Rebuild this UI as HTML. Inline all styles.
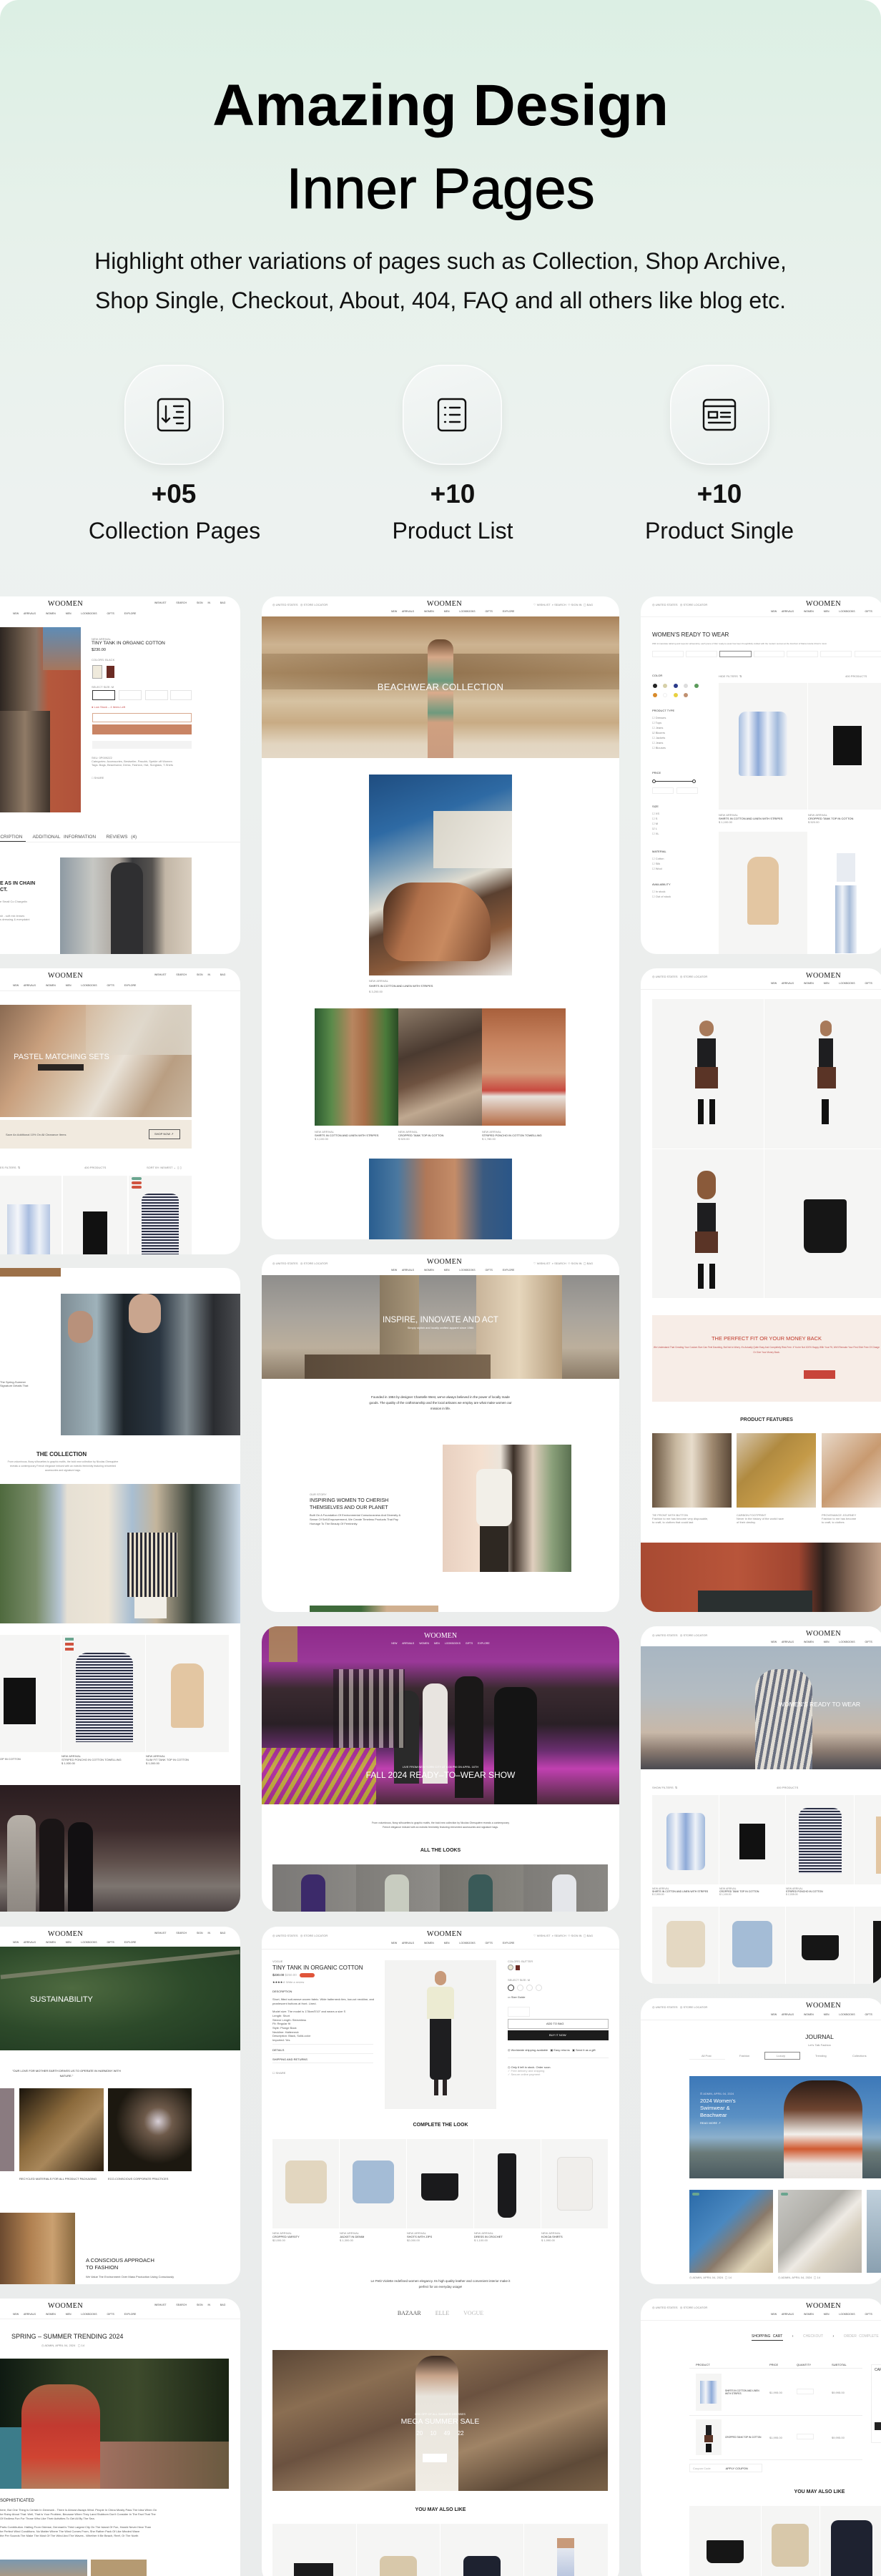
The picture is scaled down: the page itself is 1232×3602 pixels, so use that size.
<!DOCTYPE html>
<html><head><meta charset="utf-8"><style>
*{margin:0;padding:0;box-sizing:border-box}
html,body{width:1232px;height:3602px;overflow:hidden;background:#fff}
#pg{position:absolute;left:0;top:0;width:1232px;height:3602px;border-radius:26px 26px 0 0;overflow:hidden;
background:linear-gradient(180deg,#dcefe4 0px,#e6f1ea 300px,#edf2f0 700px,#eceeed 1400px,#eaecec 3602px);font-family:"Liberation Sans",sans-serif}
.a{position:absolute}
.h1{left:0;width:1232px;text-align:center;color:#000}
.sub{left:0;width:1232px;text-align:center;font-size:32px;color:#111;line-height:55px}
.sq{width:139px;height:140px;border-radius:56px;background:linear-gradient(160deg,#f4f7f6,#e9efed);box-shadow:0 6px 14px rgba(0,0,0,.06),inset 0 0 0 1.5px rgba(255,255,255,.9)}
.sq svg{position:absolute;left:45px;top:46px}
.num{width:300px;text-align:center;font-size:37px;font-weight:bold;color:#111}
.lbl{width:300px;text-align:center;font-size:32px;color:#111}
.card{position:absolute;background:#fff;border-radius:22px;overflow:hidden}
.hb{position:absolute;left:0;right:0;top:0;height:29px;border-bottom:1px solid #eee}
.logo{position:absolute;top:5px;font-family:"Liberation Serif",serif;font-size:10px;letter-spacing:.5px;color:#111}
.nav{position:absolute;top:19px;font-size:3.5px;color:#444;word-spacing:6px;white-space:nowrap}
.t{position:absolute;font-size:4px;color:#888;white-space:nowrap}
.tb{position:absolute;font-size:4px;color:#333;white-space:nowrap}
.ttl{position:absolute;color:#222;white-space:nowrap}
.ph{position:absolute;background:#f5f5f4}
.g{position:absolute}
.wt{position:absolute;color:#fff;white-space:nowrap;text-align:center}
</style></head><body><div id="pg">

<div class="a h1" style="top:100px;font-size:82px;font-weight:bold;line-height:96px">Amazing Design</div>
<div class="a h1" style="top:216px;font-size:80px;line-height:96px;-webkit-text-stroke:1px #000">Inner Pages</div>
<div class="a sub" style="top:338px">Highlight other variations of pages such as Collection, Shop Archive,</div>
<div class="a sub" style="top:393px">Shop Single, Checkout, About, 404, FAQ and all others like blog etc.</div>

<div class="a sq" style="left:174px;top:510px"><svg width="48" height="48" viewBox="0 0 48 48" fill="none" stroke="#111" stroke-width="2.4" stroke-linecap="round"><rect x="2" y="2" width="44" height="44" rx="5"/><path d="M13 12v22M8 29l5 5 5-5M24 12h13M28 20h9M24 28h13M28 36h9"/></svg></div>
<div class="a sq" style="left:563px;top:510px"><svg width="48" height="48" viewBox="0 0 48 48" fill="none" stroke="#111" stroke-width="2.4" stroke-linecap="round"><rect x="5" y="2" width="38" height="44" rx="5"/><path d="M14 14h1M21 14h14M14 24h1M21 24h14M14 34h1M21 34h14"/></svg></div>
<div class="a sq" style="left:937px;top:510px"><svg width="48" height="48" viewBox="0 0 48 48" fill="none" stroke="#111" stroke-width="2.4" stroke-linecap="round"><rect x="2" y="3" width="44" height="42" rx="5"/><path d="M2 12h44M9 20h12v8H9zM26 21h13M26 27h13M9 35h30"/></svg></div>
<div class="a num" style="left:93px;top:670px">+05</div>
<div class="a lbl" style="left:94px;top:724px">Collection Pages</div>
<div class="a num" style="left:483px;top:670px">+10</div>
<div class="a lbl" style="left:483px;top:724px">Product List</div>
<div class="a num" style="left:856px;top:670px">+10</div>
<div class="a lbl" style="left:856px;top:724px">Product Single</div>

<!-- LEFT CARD 1 -->
<div class="card" style="left:0;top:834px;width:336px;height:500px;border-radius:0 22px 22px 0">
<span class="logo" style="left:67px">WOOMEN</span>
<div class="nav" style="left:18px;top:22px">NEW ARRIVALS &nbsp;WOMEN &nbsp;MEN &nbsp;LOOKBOOKS &nbsp;GIFTS &nbsp;EXPLORE</div>
<div class="nav" style="left:216px;top:7px">WISHLIST &nbsp;SEARCH &nbsp;SIGN IN &nbsp;BAG</div>
<div class="g" style="left:0;top:43px;width:113px;height:259px;background:linear-gradient(90deg,#2d2621 0,#6e5c4c 30%,#8b7565 45%,#b5583c 60%,#b0523a 100%)"></div>
<div class="g" style="left:60px;top:43px;width:53px;height:60px;background:linear-gradient(180deg,#5e8cb6,#a6765c)"></div>
<div class="g" style="left:0;top:160px;width:70px;height:142px;background:linear-gradient(90deg,#4a3e35,#8f7a66,#3e332b)"></div>
<div class="t" style="left:128px;top:57px">NEW ARRIVAL</div>
<div class="ttl" style="left:128px;top:62px;font-size:6.5px">TINY TANK IN ORGANIC COTTON</div>
<div class="ttl" style="left:128px;top:72px;font-size:5.5px">$230.00</div>
<div class="t" style="left:128px;top:86px">COLORS: BLACK</div>
<div class="g" style="left:129px;top:96px;width:14px;height:19px;border:1px solid #aaa;background:#efeadc"></div>
<div class="g" style="left:149px;top:97px;width:11px;height:17px;background:#6b2b24"></div>
<div class="t" style="left:128px;top:124px">SELECT SIZE: M</div>
<div class="g" style="left:129px;top:131px;width:32px;height:14px;border:1px solid #333"></div>
<div class="g" style="left:166px;top:131px;width:32px;height:14px;border:1px solid #e5e5e5"></div>
<div class="g" style="left:203px;top:131px;width:32px;height:14px;border:1px solid #e5e5e5"></div>
<div class="g" style="left:238px;top:131px;width:30px;height:14px;border:1px solid #e5e5e5"></div>
<div class="t" style="left:128px;top:152px;color:#c55">● Low Stock – 4 items Left</div>
<div class="g" style="left:129px;top:163px;width:139px;height:13px;border:1px solid #d8a88e"></div>
<div class="g" style="left:129px;top:179px;width:139px;height:14px;background:#c98464"></div>
<div class="g" style="left:129px;top:202px;width:139px;height:11px;background:#f3f3f3"></div>
<div class="t" style="left:128px;top:223px">SKU: 0P0092Z2<br>Categories: Accessories, Bestseller, Pasuhir, Spekle off Women<br>Tags: Bags, Beachwear, Dress, Fashion, Hat, Sunglass, T-Shirts</div>
<div class="t" style="left:128px;top:251px">□ SHARE</div>
<div class="ttl" style="left:-4px;top:333px;font-size:6.5px;color:#555;word-spacing:3px">SCRIPTION &nbsp; ADDITIONAL INFORMATION &nbsp; REVIEWS (4)</div>
<div class="g" style="left:0;top:342px;width:36px;height:1px;background:#333"></div>
<div class="g" style="left:0;top:343px;width:336px;height:1px;background:#eee"></div>
<div class="ttl" style="left:0;top:397px;font-size:7px;font-weight:bold;line-height:9px">E AS IN CHAIN<br>CT.</div>
<div class="t" style="left:0;top:424px">e Small Co Chargelin</div>
<div class="t" style="left:0;top:444px">sh - soft mix lenses<br>s dressing &amp; everydaini</div>
<div class="g" style="left:84px;top:365px;width:184px;height:135px;background:linear-gradient(90deg,#8e9aa3 0,#c6c7c3 25%,#a9a29a 45%,#3b3b3d 55%,#55524f 70%,#c2b6a6 80%,#d9cebf 100%)"></div>
<div class="g" style="left:155px;top:372px;width:45px;height:128px;background:#2f2f31;border-radius:18px 18px 0 0"></div>
</div>

<!-- LEFT CARD 2 -->
<div class="card" style="left:0;top:1354px;width:336px;height:400px;border-radius:0 22px 22px 0">
<span class="logo" style="left:67px">WOOMEN</span>
<div class="nav" style="left:18px;top:22px">NEW ARRIVALS &nbsp;WOMEN &nbsp;MEN &nbsp;LOOKBOOKS &nbsp;GIFTS &nbsp;EXPLORE</div>
<div class="nav" style="left:216px;top:7px">WISHLIST &nbsp;SEARCH &nbsp;SIGN IN &nbsp;BAG</div>
<div class="g" style="left:0;top:31px;width:336px;height:1px;background:#eee"></div>
<div class="g" style="left:0;top:51px;width:268px;height:157px;background:linear-gradient(120deg,#8a6a52 0,#c9a07e 25%,#d8c3aa 45%,#e8e1d6 60%,#b99e82 80%,#c9b7a1 100%)"></div>
<div class="g" style="left:120px;top:51px;width:148px;height:70px;background:linear-gradient(90deg,rgba(230,225,215,.2),#d8d0c2)"></div>
<div class="wt" style="left:0;top:118px;width:172px;font-size:11px">PASTEL MATCHING SETS</div>
<div class="g" style="left:53px;top:134px;width:64px;height:9px;background:#2a2522"></div>
<div class="g" style="left:0;top:212px;width:268px;height:40px;background:#f1eadf"></div>
<div class="t" style="left:8px;top:230px;color:#555">Save An Additional 10% On All Clearance Items</div>
<div class="g" style="left:208px;top:225px;width:44px;height:14px;border:1px solid #555"></div>
<div class="t" style="left:216px;top:229px;color:#333">SHOP NOW ↗</div>
<div class="t" style="left:0;top:276px">ES FILTERS &nbsp;⇅</div>
<div class="t" style="left:118px;top:276px">400 PRODUCTS</div>
<div class="t" style="left:205px;top:276px">SORT BY: NEWEST ⌄ &nbsp;▯ ▯</div>
<div class="ph" style="left:0;top:290px;width:86px;height:110px"><div class="g" style="left:10px;top:40px;width:60px;height:70px;background:linear-gradient(90deg,#c9d5e8,#f4f6fa,#a9bde0,#eef2f8,#b5c6e3)"></div></div>
<div class="ph" style="left:88px;top:290px;width:90px;height:110px"><div class="g" style="left:28px;top:50px;width:34px;height:60px;background:#111"></div></div>
<div class="ph" style="left:180px;top:290px;width:88px;height:110px"><div class="g" style="left:18px;top:25px;width:52px;height:85px;background:repeating-linear-gradient(180deg,#2a2f45 0 2px,#e8e8ee 2px 4px);border-radius:10px 10px 0 0"></div>
<div class="g" style="left:4px;top:2px;width:14px;height:4px;background:#6aa58f;border-radius:2px"></div><div class="g" style="left:4px;top:8px;width:14px;height:4px;background:#d0533f;border-radius:2px"></div><div class="g" style="left:4px;top:14px;width:14px;height:4px;background:#d0533f;border-radius:2px"></div></div>
</div>

<!-- LEFT CARD 3 -->
<div class="card" style="left:0;top:1773px;width:336px;height:900px;border-radius:0 22px 22px 0">
<div class="g" style="left:0;top:0;width:85px;height:12px;background:#9c7048"></div>
<div class="g" style="left:85px;top:36px;width:251px;height:198px;background:linear-gradient(90deg,#7e8d95 0,#9fb2ba 20%,#1d242a 35%,#2a3540 55%,#7f8a90 70%,#2a2c30 85%,#4a4c50 100%)"></div>
<div class="g" style="left:180px;top:36px;width:45px;height:55px;background:#c9a58e;border-radius:20px"></div>
<div class="g" style="left:95px;top:60px;width:35px;height:45px;background:#b8917b;border-radius:16px"></div>
<div class="t" style="left:0;top:157px;color:#555">The Spring-Summer<br>Signature Details That</div>
<div class="ttl" style="left:0;top:256px;width:172px;text-align:center;font-size:8px;font-weight:bold">THE COLLECTION</div>
<div class="t" style="left:8px;top:268px;width:160px;text-align:center;white-space:normal;line-height:6px;font-size:3.5px">From voluminous, flowy silhouettes to graphic motifs, the bold new collection by Nicolas Ghesquière reveals a contemporary French elegance imbued with an eclectic femininity featuring reinvented accessories and signature bags.</div>
<div class="g" style="left:0;top:302px;width:336px;height:195px;background:linear-gradient(90deg,#4f6a3e 0,#7a8d6a 15%,#b7c6d4 25%,#e6e0d4 28%,#ede5d7 45%,#a8bed2 55%,#c4b59c 65%,#374038 80%,#c9d8e6 100%)"></div>
<div class="g" style="left:178px;top:370px;width:70px;height:90px;background:repeating-linear-gradient(90deg,#2c2c36 0 3px,#e8dfca 3px 6px)"></div>
<div class="g" style="left:188px;top:460px;width:45px;height:30px;background:#f2efe8"></div>
<div class="ph" style="left:0;top:513px;width:85px;height:164px"><div class="g" style="left:5px;top:60px;width:45px;height:65px;background:#111"></div></div>
<div class="ph" style="left:86px;top:513px;width:117px;height:164px"><div class="g" style="left:20px;top:25px;width:80px;height:125px;background:repeating-linear-gradient(180deg,#2a2f45 0 2px,#e8e8ee 2px 4px);border-radius:16px 16px 0 0"></div>
<div class="g" style="left:5px;top:4px;width:12px;height:4px;background:#6aa58f"></div><div class="g" style="left:5px;top:11px;width:12px;height:4px;background:#d0533f"></div><div class="g" style="left:5px;top:18px;width:12px;height:4px;background:#d0533f"></div></div>
<div class="ph" style="left:204px;top:513px;width:116px;height:164px"><div class="g" style="left:35px;top:40px;width:46px;height:90px;background:#e3c6a2;border-radius:14px 14px 4px 4px"></div></div>
<div class="t" style="left:0;top:684px;color:#555">OP IN COTTON</div>
<div class="t" style="left:86px;top:680px;color:#555">NEW ARRIVAL<br>STRIPED PONCHO IN COTTON TOWELLING<br>$ 1,930.00</div>
<div class="t" style="left:204px;top:680px;color:#555">NEW ARRIVAL<br>SLIM FIT TANK TOP IN COTTON<br>$ 1,000.00</div>
<div class="g" style="left:0;top:723px;width:336px;height:177px;background:linear-gradient(180deg,#2a1d20 0,#3b2a2b 35%,#5e4e4a 60%,#7d7570 80%,#4b4242 100%)"></div>
<div class="g" style="left:10px;top:765px;width:40px;height:135px;background:linear-gradient(#b6b0a8,#8e8882);border-radius:15px 15px 0 0"></div>
<div class="g" style="left:55px;top:770px;width:35px;height:130px;background:#1a1516;border-radius:15px 15px 0 0"></div>
<div class="g" style="left:95px;top:775px;width:35px;height:125px;background:#121012;border-radius:15px 15px 0 0"></div>
</div>

<!-- LEFT CARD 4 -->
<div class="card" style="left:0;top:2694px;width:336px;height:500px;border-radius:0 22px 22px 0">
<span class="logo" style="left:67px">WOOMEN</span>
<div class="nav" style="left:18px;top:20px">NEW ARRIVALS &nbsp;WOMEN &nbsp;MEN &nbsp;LOOKBOOKS &nbsp;GIFTS &nbsp;EXPLORE</div>
<div class="nav" style="left:216px;top:7px">WISHLIST &nbsp;SEARCH &nbsp;SIGN IN &nbsp;BAG</div>
<div class="g" style="left:0;top:28px;width:336px;height:145px;background:radial-gradient(ellipse at 30% 40%,#4e6a40,#2d4a2a 50%,#1e3620 100%)"></div>
<div class="g" style="left:0;top:50px;width:336px;height:6px;background:#8d8c78;transform:rotate(-6deg);opacity:.7"></div>
<div class="wt" style="left:0;top:96px;width:172px;font-size:11px">SUSTAINABILITY</div>
<div class="t" style="left:8px;top:198px;width:170px;text-align:center;white-space:normal;color:#333;line-height:7px">"OUR LOVE FOR MOTHER EARTH DRIVES US TO OPERATE IN HARMONY WITH NATURE."</div>
<div class="g" style="left:0;top:226px;width:20px;height:116px;background:#8a7b80"></div>
<div class="g" style="left:27px;top:226px;width:118px;height:116px;background:linear-gradient(135deg,#1a140c,#8b6a3c 40%,#a8875a 60%,#2a1e10)"></div>
<div class="g" style="left:151px;top:226px;width:117px;height:116px;background:radial-gradient(circle at 60% 40%,#d8d0d8 0,#6e5a4a 20%,#1c1810 60%)"></div>
<div class="t" style="left:27px;top:350px;color:#444">RECYCLED MATERIALS FOR ALL PRODUCT PACKAGING</div>
<div class="t" style="left:151px;top:350px;color:#444">ECO-CONSCIOUS CORPORATE PRACTICES</div>
<div class="g" style="left:0;top:400px;width:105px;height:100px;background:linear-gradient(90deg,#6b4a30,#b08050 40%,#caa070 70%,#8a6a40)"></div>
<div class="ttl" style="left:120px;top:462px;font-size:7.5px;line-height:10px">A CONSCIOUS APPROACH<br>TO FASHION</div>
<div class="t" style="left:120px;top:487px;color:#555">We Value The Environment Over Mass Production Using Consciously</div>
</div>

<!-- LEFT CARD 5 -->
<div class="card" style="left:0;top:3214px;width:336px;height:400px;border-radius:0 22px 0 0">
<span class="logo" style="left:67px">WOOMEN</span>
<div class="nav" style="left:18px;top:20px">NEW ARRIVALS &nbsp;WOMEN &nbsp;MEN &nbsp;LOOKBOOKS &nbsp;GIFTS &nbsp;EXPLORE</div>
<div class="nav" style="left:216px;top:7px">WISHLIST &nbsp;SEARCH &nbsp;SIGN IN &nbsp;BAG</div>
<div class="g" style="left:0;top:28px;width:336px;height:1px;background:#eee"></div>
<div class="ttl" style="left:16px;top:48px;font-size:9px">SPRING – SUMMER TRENDING 2024</div>
<div class="t" style="left:58px;top:63px">◷ ADMIN, APRIL 04, 2024 &nbsp; ▢ 14</div>
<div class="g" style="left:0;top:84px;width:320px;height:182px;background:linear-gradient(90deg,#0f1a12 0,#2c3a22 30%,#3d4a2c 60%,#1a2414 100%)"></div>
<div class="g" style="left:0;top:180px;width:80px;height:86px;background:#3c7c8a"></div>
<div class="g" style="left:30px;top:120px;width:110px;height:146px;background:linear-gradient(180deg,#a46040 0,#c23a30 40%,#d04432 70%,#b47a5a 100%);border-radius:40px 40px 0 0"></div>
<div class="g" style="left:140px;top:200px;width:180px;height:66px;background:linear-gradient(90deg,#a07060,#6a5a40)"></div>
<div class="ttl" style="left:0;top:280px;font-size:6px">SOPHISTICATED</div>
<div class="t" style="left:0;top:293px;line-height:6px;color:#555">here, But One Thing Is Certain In Denmark - There Is Almost Always Wind. People In China Mostly Pass The Idea When On<br>he Rainy About That. Well, That is Your Problem, Because When They Land Stubborn Don't Consider In The Fact That The<br>Of Endless Fun For Those Who Like Their Activities To Get All By The Sea.<br><br>Parts Contribution. Hailing From Odense, Denmark's Third Largest City On The Island Of Fun, Harold Never Hear Than<br>he Perfect Wind Conditions. No Matter Where The Wind Comes From, She Rather Pack Of Like Minded Wave<br>the Per Sounds The Make The Most Of The Wind And The Waves - Whether It Be Beach, Reef, Or The North</div>
<div class="g" style="left:0;top:365px;width:122px;height:35px;background:linear-gradient(#7a98b0,#c09a70)"></div>
<div class="g" style="left:127px;top:365px;width:78px;height:35px;background:#b59a72"></div>
</div>

<!-- MIDDLE CARD 1 -->
<div class="card" style="left:366px;top:834px;width:500px;height:899px">
<div class="t" style="left:15px;top:9px">◎ UNITED STATES &nbsp; ◎ STORE LOCATOR</div>
<span class="logo" style="left:231px">WOOMEN</span>
<div class="t" style="left:380px;top:9px">♡ WISHLIST &nbsp;⌕ SEARCH &nbsp;⚇ SIGN IN &nbsp;▢ BAG</div>
<div class="nav" style="left:181px;top:19px">NEW ARRIVALS &nbsp;WOMEN &nbsp;MEN &nbsp;LOOKBOOKS &nbsp;GIFTS &nbsp;EXPLORE</div>
<div class="g" style="left:0;top:28px;width:500px;height:198px;background:linear-gradient(180deg,#a8825a 0,#cdb391 20%,#b89870 40%,#d6c2a2 60%,#c8ab84 75%,#e2d5c0 90%,#e4d8c6 100%)"></div>
<div class="g" style="left:0;top:80px;width:500px;height:50px;background:linear-gradient(90deg,rgba(110,80,45,.25),rgba(90,60,30,.4) 50%,rgba(120,90,55,.3));"></div>
<div class="g" style="left:232px;top:60px;width:36px;height:166px;background:linear-gradient(180deg,#6b4a30 0,#d6a888 15%,#6e9a7e 35%,#dbab8c 45%,#6e9a7e 62%,#d0a080 70%,#c99c80 100%);border-radius:14px 14px 0 0"></div>
<div class="wt" style="left:0;top:119px;width:500px;font-size:13px;letter-spacing:.3px">BEACHWEAR COLLECTION</div>
<div class="g" style="left:150px;top:249px;width:200px;height:281px;background:linear-gradient(160deg,#1f4d80 0,#2e6aa4 25%,#7fa0b8 40%,#e0dcd0 55%,#5a4030 65%,#8a5a3a 80%,#e8e6e2 100%)"></div>
<div class="g" style="left:240px;top:300px;width:110px;height:80px;background:linear-gradient(120deg,#d8d4c8,#f0ede6)"></div>
<div class="g" style="left:170px;top:400px;width:150px;height:110px;background:linear-gradient(110deg,#3a2418 0,#b0704a 30%,#c88a60 60%,#7a4a30 100%);border-radius:40px 60px 20px 30px"></div>
<div class="t" style="left:150px;top:535px">NEW ARRIVAL</div>
<div class="tb" style="left:150px;top:542px">SHIRTS IN COTTON AND LINEN WITH STRIPES</div>
<div class="t" style="left:150px;top:550px">$ 3,200.00</div>
<div class="g" style="left:74px;top:576px;width:117px;height:164px;background:linear-gradient(90deg,#2c5a30 0,#5a8a4a 20%,#b88660 45%,#a86e48 60%,#4a7a3a 85%,#2a4a24 100%)"></div>
<div class="g" style="left:191px;top:576px;width:117px;height:164px;background:linear-gradient(160deg,#8c7a68 0,#4a3a30 35%,#6e5240 55%,#bfa890 75%,#7a6656 100%)"></div>
<div class="g" style="left:308px;top:576px;width:117px;height:164px;background:linear-gradient(180deg,#a8603c 0,#c88460 30%,#d49a78 55%,#c84a40 70%,#e8e2dc 75%,#b46a44 100%)"></div>
<div class="t" style="left:74px;top:746px">NEW ARRIVAL<br><span style="color:#333">SHIRTS IN COTTON AND LINEN WITH STRIPES</span><br>$ 1,100.00</div>
<div class="t" style="left:191px;top:746px">NEW ARRIVAL<br><span style="color:#333">CROPPED TANK TOP IN COTTON</span><br>$ 520.00</div>
<div class="t" style="left:308px;top:746px">NEW ARRIVAL<br><span style="color:#333">STRIPED PONCHO IN COTTON TOWELLING</span><br>$ 1,780.00</div>
<div class="g" style="left:150px;top:786px;width:200px;height:113px;background:linear-gradient(90deg,#2a5e90 0,#4a78a0 20%,#b07858 40%,#c48c68 60%,#3a5a80 80%,#2a5688 100%)"></div>
</div>

<!-- MIDDLE CARD 2 -->
<div class="card" style="left:366px;top:1754px;width:500px;height:500px">
<div class="t" style="left:15px;top:10px">◎ UNITED STATES &nbsp; ◎ STORE LOCATOR</div>
<span class="logo" style="left:231px">WOOMEN</span>
<div class="t" style="left:380px;top:10px">♡ WISHLIST &nbsp;⌕ SEARCH &nbsp;⚇ SIGN IN &nbsp;▢ BAG</div>
<div class="nav" style="left:181px;top:20px">NEW ARRIVALS &nbsp;WOMEN &nbsp;MEN &nbsp;LOOKBOOKS &nbsp;GIFTS &nbsp;EXPLORE</div>
<div class="g" style="left:0;top:29px;width:500px;height:145px;background:linear-gradient(180deg,#8f8e8c 0,#a9a49c 40%,#bcaf9c 70%,#8a7a66 100%)"></div>
<div class="g" style="left:165px;top:29px;width:55px;height:145px;background:linear-gradient(90deg,#8a7a62,#a8967a)"></div>
<div class="g" style="left:300px;top:29px;width:120px;height:145px;background:linear-gradient(90deg,#c8b49a,#e6d6bc 50%,#b49c7c)"></div>
<div class="g" style="left:60px;top:140px;width:260px;height:34px;background:linear-gradient(90deg,#5a4a3a,#7a6650)"></div>
<div class="wt" style="left:0;top:86px;width:500px;font-size:11.5px">INSPIRE, INNOVATE AND ACT</div>
<div class="wt" style="left:0;top:100px;width:500px;font-size:4px">Simply stylish and locally crafted apparel since 1984</div>
<div class="t" style="left:150px;top:196px;width:200px;text-align:center;white-space:normal;color:#333;font-size:4.5px;line-height:8px">Founded in 1984 by designer Chantelle West, we've always believed in the power of locally made goods. The quality of the craftsmanship and the local artisans we employ are what make women our mission in life.</div>
<div class="t" style="left:67px;top:333px">OUR STORY</div>
<div class="ttl" style="left:67px;top:340px;font-size:7px;line-height:9.5px">INSPIRING WOMEN TO CHERISH<br>THEMSELVES AND OUR PLANET</div>
<div class="t" style="left:67px;top:362px;line-height:6px;color:#555">Built On A Foundation Of Environmental Consciousness And Diversity &amp;<br>Sense Of Self-Empowerment, We Create Timeless Products That Pay<br>Homage To The Beauty Of Femininity.</div>
<div class="g" style="left:253px;top:266px;width:180px;height:178px;background:linear-gradient(90deg,#e8d0c0 0,#f4e0d0 30%,#ece4da 45%,#3c3028 55%,#e0cfbe 70%,#8aa07a 85%,#5a7050 100%)"></div>
<div class="g" style="left:300px;top:300px;width:50px;height:80px;background:#f2efe8;border-radius:10px"></div>
<div class="g" style="left:305px;top:380px;width:40px;height:64px;background:#2e2822"></div>
<div class="g" style="left:67px;top:491px;width:180px;height:9px;background:linear-gradient(90deg,#3e6a3a 40%,#d0b090 60%)"></div>
</div>

<!-- MIDDLE CARD 3 -->
<div class="card" style="left:366px;top:2274px;width:500px;height:399px">
<div class="g" style="left:0;top:0;width:500px;height:249px;background:linear-gradient(180deg,#8e2a8a 0,#9a3898 20%,#3a2a30 35%,#2a2026 55%,#6a2e70 70%,#c040b0 80%,#4a2a3a 100%)"></div>
<div class="g" style="left:0;top:170px;width:160px;height:79px;background:repeating-linear-gradient(120deg,#c8c030 0 6px,#b030a0 6px 12px);opacity:.8"></div>
<div class="g" style="left:10px;top:0;width:40px;height:50px;background:#b8b040;opacity:.6"></div>
<div class="g" style="left:270px;top:70px;width:40px;height:170px;background:#1a1818;border-radius:14px 14px 0 0"></div>
<div class="g" style="left:225px;top:80px;width:35px;height:140px;background:#e8e4e0;border-radius:14px 14px 0 0"></div>
<div class="g" style="left:325px;top:85px;width:60px;height:164px;background:#141414;border-radius:18px 18px 0 0"></div>
<div class="g" style="left:185px;top:90px;width:35px;height:130px;background:#2a2a2a;border-radius:14px 14px 0 0"></div>
<div class="g" style="left:100px;top:60px;width:100px;height:110px;background:repeating-linear-gradient(90deg,#201a1e 0 8px,#c8c0b8 8px 14px);opacity:.6"></div>
<div class="wt" style="left:0;top:8px;width:500px;font-family:'Liberation Serif',serif;font-size:10px">WOOMEN</div>
<div class="wt" style="left:0;top:22px;width:500px;font-size:3.5px;word-spacing:6px">NEW ARRIVALS WOMEN MEN LOOKBOOKS GIFTS EXPLORE</div>
<div class="wt" style="left:0;top:194px;width:500px;font-size:4px">LIVE FROM NEW YORK CITY AT 6:00 PM ON APRIL 16TH</div>
<div class="wt" style="left:0;top:201px;width:500px;font-size:12px">FALL 2024 READY–TO–WEAR SHOW</div>
<div class="t" style="left:150px;top:272px;width:200px;text-align:center;white-space:normal;line-height:6px;font-size:3.5px;color:#555">From voluminous, flowy silhouettes to graphic motifs, the bold new collection by Nicolas Ghesquière reveals a contemporary French elegance imbued with an eclectic femininity featuring reinvented accessories and signature bags.</div>
<div class="ttl" style="left:0;top:310px;width:500px;text-align:center;font-size:7px;font-weight:bold">ALL THE LOOKS</div>
<div class="g" style="left:15px;top:333px;width:117px;height:66px;background:linear-gradient(90deg,#7a7876,#8a8884)"><div class="g" style="left:40px;top:14px;width:34px;height:52px;background:#3c2a6a;border-radius:12px 12px 0 0"></div></div>
<div class="g" style="left:132px;top:333px;width:117px;height:66px;background:linear-gradient(90deg,#7e7c78,#8e8c88)"><div class="g" style="left:40px;top:14px;width:34px;height:52px;background:#c8ccc0;border-radius:12px 12px 0 0"></div></div>
<div class="g" style="left:249px;top:333px;width:117px;height:66px;background:linear-gradient(90deg,#76746e,#86847e)"><div class="g" style="left:40px;top:14px;width:34px;height:52px;background:#3a5a58;border-radius:12px 12px 0 0"></div></div>
<div class="g" style="left:366px;top:333px;width:118px;height:66px;background:linear-gradient(90deg,#7e7c78,#8a8884)"><div class="g" style="left:40px;top:14px;width:34px;height:52px;background:#e4e6ea;border-radius:12px 12px 0 0"></div></div>
</div>

<!-- MIDDLE CARD 4 -->
<div class="card" style="left:366px;top:2694px;width:500px;height:920px">
<div class="t" style="left:15px;top:10px">◎ UNITED STATES &nbsp; ◎ STORE LOCATOR</div>
<span class="logo" style="left:231px">WOOMEN</span>
<div class="t" style="left:380px;top:10px">♡ WISHLIST &nbsp;⌕ SEARCH &nbsp;⚇ SIGN IN &nbsp;▢ BAG</div>
<div class="nav" style="left:181px;top:21px">NEW ARRIVALS &nbsp;WOMEN &nbsp;MEN &nbsp;LOOKBOOKS &nbsp;GIFTS &nbsp;EXPLORE</div>
<div class="g" style="left:0;top:31px;width:500px;height:1px;background:#eee"></div>
<div class="t" style="left:15px;top:46px">VOGUE</div>
<div class="ttl" style="left:15px;top:53px;font-size:8px">TINY TANK IN ORGANIC COTTON</div>
<div class="ttl" style="left:15px;top:65px;font-size:4.5px">$230.00 <span style="color:#aaa">$250.00</span></div>
<div class="g" style="left:53px;top:65px;width:21px;height:6px;background:#e0553a;border-radius:3px"></div>
<div class="t" style="left:15px;top:75px;color:#222">★★★★☆ <span style="color:#999">Write a review</span></div>
<div class="tb" style="left:15px;top:88px">DESCRIPTION</div>
<div class="t" style="left:15px;top:99px;line-height:5.7px;color:#555">Short, fitted suit-weave woven fabric. Wide halterneck ties, low-cut neckline, and<br>pearlescent buttons at front. Lined.<br><br>Model size: The model is 178cm/5'10" and wears a size S<br>Length: Short<br>Sleeve Length: Sleeveless<br>Fit: Regular fit<br>Style: Plunge Back<br>Neckline: Halterneck<br>Description: Black, Solid-color<br>Imported: Yes</div>
<div class="g" style="left:15px;top:164px;width:141px;height:1px;background:#eee"></div>
<div class="tb" style="left:15px;top:170px">DETAILS</div>
<div class="g" style="left:15px;top:177px;width:141px;height:1px;background:#eee"></div>
<div class="tb" style="left:15px;top:183px">SHIPPING AND RETURNS</div>
<div class="g" style="left:15px;top:190px;width:141px;height:1px;background:#eee"></div>
<div class="t" style="left:15px;top:202px">☐ SHARE</div>
<div class="ph" style="left:172px;top:47px;width:156px;height:208px;background:#f3f3f2"></div>
<div class="g" style="left:242px;top:62px;width:16px;height:20px;background:#c89a7a;border-radius:8px"></div>
<div class="g" style="left:231px;top:84px;width:38px;height:45px;background:#ecebd2;border-radius:6px 6px 0 0"></div>
<div class="g" style="left:235px;top:129px;width:30px;height:85px;background:#1e1e20;border-radius:0 0 6px 6px"></div>
<div class="g" style="left:241px;top:214px;width:6px;height:22px;background:#2a2424"></div>
<div class="g" style="left:253px;top:214px;width:6px;height:22px;background:#2a2424"></div>
<div class="t" style="left:344px;top:46px">COLORS: BUTTER</div>
<div class="g" style="left:344px;top:53px;width:8px;height:8px;border-radius:50%;background:#efebd8;border:1px solid #999"></div>
<div class="g" style="left:355px;top:54px;width:6px;height:7px;background:#6b2b24"></div>
<div class="t" style="left:344px;top:72px">SELECT SIZE: M</div>
<div class="g" style="left:344px;top:81px;width:9px;height:9px;border-radius:50%;border:1px solid #333"></div>
<div class="g" style="left:357px;top:81px;width:9px;height:9px;border-radius:50%;border:1px solid #ddd"></div>
<div class="g" style="left:370px;top:81px;width:9px;height:9px;border-radius:50%;border:1px solid #ddd"></div>
<div class="g" style="left:383px;top:81px;width:9px;height:9px;border-radius:50%;border:1px solid #ddd"></div>
<div class="t" style="left:344px;top:96px;color:#444">▭ Size Guide</div>
<div class="g" style="left:344px;top:112px;width:31px;height:14px;border:1px solid #eee"></div>
<div class="g" style="left:344px;top:129px;width:141px;height:14px;border:1px solid #bbb"></div>
<div class="t" style="left:398px;top:133px;color:#333">ADD TO BAG</div>
<div class="g" style="left:344px;top:145px;width:141px;height:14px;background:#1c1c1c"></div>
<div class="t" style="left:402px;top:149px;color:#fff">BUY IT NOW</div>
<div class="t" style="left:344px;top:170px;color:#444">◎ Worldwide shipping available &nbsp; ▣ Easy returns &nbsp; ▣ Send it as a gift</div>
<div class="g" style="left:344px;top:183px;width:141px;height:1px;background:#eee"></div>
<div class="t" style="left:344px;top:194px;color:#444">◷ Only 6 left in stock. Order soon.<br><span style="color:#aaa">✓ Free delivery and shipping<br>✓ Secure online payment</span></div>
<div class="ttl" style="left:0;top:274px;width:500px;text-align:center;font-size:7px;font-weight:bold">COMPLETE THE LOOK</div>
<div class="ph" style="left:15px;top:297px;width:93px;height:125px"><div class="g" style="left:18px;top:30px;width:58px;height:60px;background:#e2d6bf;border-radius:8px"></div></div>
<div class="ph" style="left:109px;top:297px;width:93px;height:125px"><div class="g" style="left:18px;top:30px;width:58px;height:60px;background:#a4bcd6;border-radius:8px"></div></div>
<div class="ph" style="left:203px;top:297px;width:93px;height:125px"><div class="g" style="left:20px;top:48px;width:52px;height:38px;background:#1a1a1c;border-radius:2px 2px 8px 8px"></div></div>
<div class="ph" style="left:297px;top:297px;width:93px;height:125px"><div class="g" style="left:33px;top:20px;width:26px;height:90px;background:#1a1a1c;border-radius:4px 4px 10px 10px"></div></div>
<div class="ph" style="left:391px;top:297px;width:93px;height:125px"><div class="g" style="left:22px;top:25px;width:50px;height:75px;background:#f0eeeb;border:1px solid #e0dedb;border-radius:6px"></div></div>
<div class="t" style="left:15px;top:426px">NEW ARRIVAL<br><span style="color:#333">CROPPED VARSITY</span><br>$2,000.00</div>
<div class="t" style="left:109px;top:426px">NEW ARRIVAL<br><span style="color:#333">JACKET IN DENIM</span><br>$ 1,300.00</div>
<div class="t" style="left:203px;top:426px">NEW ARRIVAL<br><span style="color:#333">SHOTS WITH ZIPS</span><br>$2,000.00</div>
<div class="t" style="left:297px;top:426px">NEW ARRIVAL<br><span style="color:#333">DRESS IN CROCHET</span><br>$ 1,100.00</div>
<div class="t" style="left:391px;top:426px">NEW ARRIVAL<br><span style="color:#333">KOKOA SHIRTS</span><br>$ 1,990.00</div>
<div class="t" style="left:150px;top:492px;width:200px;text-align:center;white-space:normal;line-height:8px;font-size:4.5px;color:#444">Le Petit Violette redefined women elegancy. Its high quality leather and convenient interior make it perfect for an everyday usage!</div>
<div class="ttl" style="left:0;top:536px;width:500px;text-align:center;font-family:'Liberation Serif',serif;font-size:8px;color:#555;word-spacing:18px">BAZAAR <span style="color:#aaa">ELLE</span> <span style="color:#bbb">VOGUE</span></div>
<div class="g" style="left:15px;top:592px;width:469px;height:197px;background:linear-gradient(160deg,#5a4636 0,#8a6e52 25%,#6b5240 45%,#a08466 65%,#5e4a38 85%,#7a6248 100%)"></div>
<div class="g" style="left:215px;top:600px;width:60px;height:189px;background:linear-gradient(180deg,#3a2a20 0,#c8a48a 15%,#e8e4dc 30%,#f0ece4 100%);border-radius:25px 25px 0 0"></div>
<div class="wt" style="left:15px;top:679px;width:469px;font-size:4px">30% OFF OF ALL SUMMER DRESSES</div>
<div class="wt" style="left:15px;top:686px;width:469px;font-size:10.5px">MEGA SUMMER SALE</div>
<div class="wt" style="left:15px;top:704px;width:469px;font-size:8px;word-spacing:8px">20 10 49 22</div>
<div class="g" style="left:225px;top:737px;width:34px;height:12px;background:#fff"></div>
<div class="ttl" style="left:0;top:812px;width:500px;text-align:center;font-size:7px;font-weight:bold">YOU MAY ALSO LIKE</div>
<div class="ph" style="left:15px;top:835px;width:117px;height:90px"><div class="g" style="left:30px;top:55px;width:55px;height:35px;background:#1a1a1c"></div></div>
<div class="ph" style="left:133px;top:835px;width:116px;height:90px"><div class="g" style="left:32px;top:45px;width:52px;height:45px;background:#d8c8aa;border-radius:8px"></div></div>
<div class="ph" style="left:250px;top:835px;width:116px;height:90px"><div class="g" style="left:32px;top:45px;width:52px;height:45px;background:#1e2230;border-radius:8px"></div></div>
<div class="ph" style="left:367px;top:835px;width:117px;height:90px"><div class="g" style="left:46px;top:20px;width:24px;height:70px;background:linear-gradient(#c89a7a 20%,#e4e8f0 20%,#a8b8d8)"></div></div>
</div>

<!-- RIGHT CARD 1 -->
<div class="card" style="left:896px;top:834px;width:340px;height:500px">
<div class="t" style="left:16px;top:9px">◎ UNITED STATES &nbsp; ◎ STORE LOCATOR</div>
<span class="logo" style="left:231px">WOOMEN</span>
<div class="nav" style="left:182px;top:19px">NEW ARRIVALS &nbsp;WOMEN &nbsp;MEN &nbsp;LOOKBOOKS &nbsp;GIFTS &nbsp;EXPLORE</div>
<div class="g" style="left:0;top:28px;width:340px;height:1px;background:#f0f0f0"></div>
<div class="ttl" style="left:16px;top:49px;font-size:8px">WOMEN'S READY TO WEAR</div>
<div class="t" style="left:16px;top:64px;font-size:3px">With immaculate tailoring and superior artisanship, each piece of Dior ready-to-wear has been thoughtfully crafted with the modern woman at the forefront of Maria Grazia Chiuri's mind.</div>
<div class="g" style="left:16px;top:76px;width:44px;height:9px;border:1px solid #eee"></div>
<div class="g" style="left:63px;top:76px;width:44px;height:9px;border:1px solid #eee"></div>
<div class="g" style="left:110px;top:76px;width:45px;height:9px;border:1px solid #888"></div>
<div class="g" style="left:158px;top:76px;width:43px;height:9px;border:1px solid #eee"></div>
<div class="g" style="left:204px;top:76px;width:44px;height:9px;border:1px solid #eee"></div>
<div class="g" style="left:251px;top:76px;width:44px;height:9px;border:1px solid #eee"></div>
<div class="g" style="left:299px;top:76px;width:44px;height:9px;border:1px solid #eee"></div>
<div class="tb" style="left:16px;top:108px">COLOR</div>
<div class="g" style="left:17px;top:122px;width:6px;height:6px;border-radius:50%;background:#222"></div>
<div class="g" style="left:31px;top:122px;width:6px;height:6px;border-radius:50%;background:#d6d0a8"></div>
<div class="g" style="left:46px;top:122px;width:6px;height:6px;border-radius:50%;background:#2a3a8a"></div>
<div class="g" style="left:60px;top:122px;width:6px;height:6px;border-radius:50%;background:#ddd"></div>
<div class="g" style="left:75px;top:122px;width:6px;height:6px;border-radius:50%;background:#5a9a5a"></div>
<div class="g" style="left:17px;top:135px;width:6px;height:6px;border-radius:50%;background:#d88a2a"></div>
<div class="g" style="left:31px;top:135px;width:6px;height:6px;border-radius:50%;background:#fff;border:1px solid #eee"></div>
<div class="g" style="left:46px;top:135px;width:6px;height:6px;border-radius:50%;background:#e8d040"></div>
<div class="g" style="left:60px;top:135px;width:6px;height:6px;border-radius:50%;background:#c09070"></div>
<div class="tb" style="left:16px;top:157px">PRODUCT TYPE</div>
<div class="t" style="left:16px;top:166px;line-height:7px">☐ Dresses<br>☐ Tops<br>☐ Jeans<br>☑ Blazers<br>☐ Jackets<br>☐ Jeans<br>☐ Blouses</div>
<div class="tb" style="left:16px;top:244px">PRICE</div>
<div class="g" style="left:18px;top:258px;width:56px;height:1px;background:#333"></div>
<div class="g" style="left:16px;top:256px;width:5px;height:5px;border-radius:50%;border:1px solid #333;background:#fff"></div>
<div class="g" style="left:72px;top:256px;width:5px;height:5px;border-radius:50%;border:1px solid #333;background:#fff"></div>
<div class="g" style="left:16px;top:267px;width:30px;height:9px;border:1px solid #eee"></div>
<div class="g" style="left:50px;top:267px;width:30px;height:9px;border:1px solid #eee"></div>
<div class="tb" style="left:16px;top:291px">SIZE</div>
<div class="t" style="left:16px;top:300px;line-height:7px">☐ XS<br>☐ S<br>☐ M<br>☑ L<br>☐ XL</div>
<div class="tb" style="left:16px;top:354px">MATERIAL</div>
<div class="t" style="left:16px;top:363px;line-height:7px">☐ Cotton<br>☐ Silk<br>☐ Wool</div>
<div class="tb" style="left:16px;top:400px">AVAILABILITY</div>
<div class="t" style="left:16px;top:409px;line-height:7px">☐ In stock<br>☐ Out of stock</div>
<div class="t" style="left:109px;top:109px">HIDE FILTERS &nbsp;⇅</div>
<div class="t" style="left:286px;top:109px">400 PRODUCTS</div>
<div class="ph" style="left:109px;top:121px;width:124px;height:177px"><div class="g" style="left:28px;top:40px;width:68px;height:90px;background:linear-gradient(90deg,#a8bfe0,#f2f4f8,#8eaad8,#eef2f8,#a2badc,#f0f2f6);border-radius:10px 10px 4px 4px"></div></div>
<div class="ph" style="left:234px;top:121px;width:106px;height:177px"><div class="g" style="left:35px;top:60px;width:40px;height:55px;background:#111"></div></div>
<div class="t" style="left:109px;top:303px">NEW ARRIVAL<br><span style="color:#333">SHIRTS IN COTTON AND LINEN WITH STRIPES</span><br>$ 1,100.00</div>
<div class="t" style="left:234px;top:303px">NEW ARRIVAL<br><span style="color:#333">CROPPED TANK TOP IN COTTON</span><br>$ 520.00</div>
<div class="ph" style="left:109px;top:329px;width:124px;height:171px"><div class="g" style="left:40px;top:35px;width:44px;height:95px;background:#e3c6a2;border-radius:14px 14px 4px 4px"></div></div>
<div class="ph" style="left:234px;top:329px;width:106px;height:171px;background:#fff"><div class="g" style="left:40px;top:30px;width:26px;height:40px;background:#e8ecf2"></div><div class="g" style="left:38px;top:75px;width:30px;height:95px;background:linear-gradient(90deg,#a8bcd8,#eef2f8,#a8bcd8,#eef2f8)"></div></div>
</div>

<!-- RIGHT CARD 2 -->
<div class="card" style="left:896px;top:1354px;width:340px;height:900px">
<div class="t" style="left:16px;top:9px">◎ UNITED STATES &nbsp; ◎ STORE LOCATOR</div>
<span class="logo" style="left:231px">WOOMEN</span>
<div class="nav" style="left:182px;top:19px">NEW ARRIVALS &nbsp;WOMEN &nbsp;MEN &nbsp;LOOKBOOKS &nbsp;GIFTS &nbsp;EXPLORE</div>
<div class="g" style="left:0;top:29px;width:340px;height:1px;background:#f0f0f0"></div>
<div class="ph" style="left:16px;top:43px;width:156px;height:209px"><div class="g" style="left:66px;top:30px;width:20px;height:22px;background:#a87a5a;border-radius:10px"></div><div class="g" style="left:63px;top:55px;width:26px;height:40px;background:#1e1e20"></div><div class="g" style="left:60px;top:95px;width:32px;height:30px;background:#5a3426"></div><div class="g" style="left:64px;top:140px;width:24px;height:35px;background:repeating-linear-gradient(90deg,#111 0 8px,transparent 8px 16px)"></div></div>
<div class="ph" style="left:173px;top:43px;width:163px;height:209px"><div class="g" style="left:78px;top:30px;width:16px;height:22px;background:#a87a5a;border-radius:8px"></div><div class="g" style="left:76px;top:55px;width:20px;height:40px;background:#1e1e20"></div><div class="g" style="left:74px;top:95px;width:26px;height:30px;background:#5a3426"></div><div class="g" style="left:80px;top:140px;width:10px;height:35px;background:#111"></div></div>
<div class="ph" style="left:16px;top:253px;width:156px;height:208px"><div class="g" style="left:63px;top:30px;width:26px;height:40px;background:#8a5a3a;border-radius:12px"></div><div class="g" style="left:63px;top:75px;width:26px;height:40px;background:#1e1e20"></div><div class="g" style="left:60px;top:115px;width:32px;height:30px;background:#5a3426"></div><div class="g" style="left:64px;top:160px;width:24px;height:35px;background:repeating-linear-gradient(90deg,#111 0 8px,transparent 8px 16px)"></div></div>
<div class="ph" style="left:173px;top:253px;width:163px;height:208px"><div class="g" style="left:55px;top:70px;width:60px;height:75px;background:#161616;border-radius:4px 4px 10px 10px"></div></div>
<div class="g" style="left:16px;top:485px;width:324px;height:121px;background:#f7ede7"></div>
<div class="ttl" style="left:16px;top:513px;width:320px;text-align:center;font-size:7.5px;color:#c0392b">THE PERFECT FIT OR YOUR MONEY BACK</div>
<div class="t" style="left:16px;top:527px;width:320px;text-align:center;white-space:normal;line-height:7px;font-size:3.2px;color:#c05050">We Understand That Creating Your Custom Size Can Feel Daunting, But Not to Worry. It's Actually Quite Easy And Completely Risk-Free. If You're Not 100% Happy With Your Fit, We'll Remake Your First Shirt Free Of Charge Or Give Your Money Back.</div>
<div class="g" style="left:228px;top:562px;width:44px;height:12px;background:#c8443a"></div>
<div class="ttl" style="left:16px;top:628px;width:320px;text-align:center;font-size:7px;font-weight:bold;color:#333">PRODUCT FEATURES</div>
<div class="g" style="left:16px;top:650px;width:111px;height:104px;background:linear-gradient(90deg,#6a5642,#c8b8a0 30%,#e8ddcc 50%,#a08a70 75%,#5a4838)"></div>
<div class="g" style="left:134px;top:650px;width:111px;height:104px;background:linear-gradient(135deg,#d8c8b0 0,#b08a40 35%,#c49a48 60%,#e0d0b8 100%)"></div>
<div class="g" style="left:253px;top:650px;width:90px;height:104px;background:linear-gradient(135deg,#e8d8c8,#c89a70 50%,#f0e4d8)"></div>
<div class="t" style="left:16px;top:762px;line-height:5px">TIE FRONT WITH BUTTON<br>Fashion to me has become very disposable,<br>to craft, to clothes that could last</div>
<div class="t" style="left:134px;top:762px;line-height:5px">CARBON FOOTPRINT<br>Never in the history of the world have<br>of their destiny.</div>
<div class="t" style="left:253px;top:762px;line-height:5px">PROVENANCE JOURNEY<br>Fashion to me has become<br>to craft, to clothes</div>
<div class="g" style="left:0;top:803px;width:340px;height:97px;background:linear-gradient(90deg,#a84a32 0,#b8553a 40%,#a04530 65%,#2a201c 75%,#7a6050 85%,#c8a890 100%)"></div>
<div class="g" style="left:80px;top:870px;width:160px;height:30px;background:#2a3030"></div>
</div>

<!-- RIGHT CARD 3 -->
<div class="card" style="left:896px;top:2274px;width:340px;height:500px">
<div class="t" style="left:16px;top:10px">◎ UNITED STATES &nbsp; ◎ STORE LOCATOR</div>
<span class="logo" style="left:231px">WOOMEN</span>
<div class="nav" style="left:182px;top:20px">NEW ARRIVALS &nbsp;WOMEN &nbsp;MEN &nbsp;LOOKBOOKS &nbsp;GIFTS &nbsp;EXPLORE</div>
<div class="g" style="left:0;top:28px;width:340px;height:172px;background:linear-gradient(180deg,#a8b6c2 0,#b4bcc2 40%,#c8b8a8 70%,#8a7a70 85%,#4a4a50 100%)"></div>
<div class="g" style="left:160px;top:60px;width:80px;height:140px;background:repeating-linear-gradient(100deg,#6a7080 0 4px,#e0dcd4 4px 9px);border-radius:30px 30px 0 0"></div>
<div class="wt" style="left:170px;top:104px;width:160px;font-size:8.5px">WOMEN'S READY TO WEAR</div>
<div class="t" style="left:16px;top:223px">SHOW FILTERS &nbsp;⇅</div>
<div class="t" style="left:190px;top:223px">400 PRODUCTS</div>
<div class="ph" style="left:16px;top:236px;width:93px;height:125px"><div class="g" style="left:20px;top:25px;width:54px;height:80px;background:linear-gradient(90deg,#a8bfe0,#f2f4f8,#8eaad8,#eef2f8,#a2badc);border-radius:8px"></div></div>
<div class="ph" style="left:110px;top:236px;width:92px;height:125px"><div class="g" style="left:28px;top:40px;width:36px;height:50px;background:#111"></div></div>
<div class="ph" style="left:203px;top:236px;width:95px;height:125px"><div class="g" style="left:18px;top:18px;width:60px;height:92px;background:repeating-linear-gradient(180deg,#2a2f45 0 2px,#e8e8ee 2px 4px);border-radius:12px 12px 0 0"></div></div>
<div class="ph" style="left:299px;top:236px;width:41px;height:125px"><div class="g" style="left:30px;top:30px;width:11px;height:80px;background:#e3c6a2"></div></div>
<div class="t" style="left:16px;top:365px;font-size:3.5px">NEW ARRIVAL<br><span style="color:#333">SHIRTS IN COTTON AND LINEN WITH STRIPES</span><br>$ 2,000.00</div>
<div class="t" style="left:110px;top:365px;font-size:3.5px">NEW ARRIVAL<br><span style="color:#333">CROPPED TANK TOP IN COTTON</span><br>$ 1,100.00</div>
<div class="t" style="left:203px;top:365px;font-size:3.5px">NEW ARRIVAL<br><span style="color:#333">STRIPED PONCHO IN COTTON</span><br>$ 2,035.00</div>
<div class="ph" style="left:16px;top:392px;width:93px;height:108px"><div class="g" style="left:20px;top:20px;width:54px;height:65px;background:#e4d8c2;border-radius:8px"></div></div>
<div class="ph" style="left:110px;top:392px;width:92px;height:108px"><div class="g" style="left:18px;top:20px;width:56px;height:65px;background:#a4bcd6;border-radius:8px"></div></div>
<div class="ph" style="left:203px;top:392px;width:95px;height:108px"><div class="g" style="left:22px;top:40px;width:52px;height:35px;background:#161616;border-radius:2px 2px 8px 8px"></div></div>
<div class="ph" style="left:299px;top:392px;width:41px;height:108px"><div class="g" style="left:26px;top:20px;width:12px;height:88px;background:#161616"></div></div>
</div>

<!-- RIGHT CARD 4 -->
<div class="card" style="left:896px;top:2794px;width:340px;height:400px">
<div class="t" style="left:16px;top:10px">◎ UNITED STATES &nbsp; ◎ STORE LOCATOR</div>
<span class="logo" style="left:231px">WOOMEN</span>
<div class="nav" style="left:182px;top:21px">NEW ARRIVALS &nbsp;WOMEN &nbsp;MEN &nbsp;LOOKBOOKS &nbsp;GIFTS &nbsp;EXPLORE</div>
<div class="g" style="left:0;top:30px;width:340px;height:1px;background:#f0f0f0"></div>
<div class="ttl" style="left:170px;top:49px;width:160px;text-align:center;font-size:8.5px">JOURNAL</div>
<div class="t" style="left:170px;top:63px;width:160px;text-align:center">Let's Talk Fashion</div>
<div class="g" style="left:68px;top:76px;width:50px;height:10px;border-bottom:1px solid #eee"></div>
<div class="t" style="left:85px;top:78px">All Post</div>
<div class="t" style="left:138px;top:78px">Fashion</div>
<div class="g" style="left:173px;top:75px;width:50px;height:11px;border:1px solid #888"></div>
<div class="t" style="left:190px;top:78px">Luxury</div>
<div class="t" style="left:244px;top:78px">Trending</div>
<div class="t" style="left:296px;top:78px">Collections</div>
<div class="g" style="left:68px;top:109px;width:272px;height:143px;background:linear-gradient(180deg,#3c78b8 0,#5a90c4 40%,#8cb0cc 60%,#6a7a78 75%,#4a5a60 100%)"></div>
<div class="g" style="left:200px;top:115px;width:110px;height:137px;background:linear-gradient(180deg,#2a1c16 0,#6e4430 30%,#f2f0ec 55%,#d05a30 70%,#eeeae6 85%,#e8e4e0 100%);border-radius:40px 40px 0 0"></div>
<div class="t" style="left:83px;top:131px;color:#dde">⊡ ADMIN, APRIL 04, 2024</div>
<div class="wt" style="left:83px;top:139px;font-size:7.5px;text-align:left;line-height:10px">2024 Women's<br>Swimwear &amp;<br>Beachwear</div>
<div class="t" style="left:83px;top:172px;color:#fff">READ MORE ↗</div>
<div class="g" style="left:68px;top:268px;width:117px;height:116px;background:linear-gradient(135deg,#2a6aa8 0,#4a88c0 40%,#8a7a6a 60%,#e0d4b8 80%,#c8b89a 100%)"></div>
<div class="g" style="left:192px;top:268px;width:117px;height:116px;background:linear-gradient(135deg,#c8c8c4 0,#b0aea8 40%,#eeeae4 55%,#d8d0c0 70%,#bab4aa 100%)"></div>
<div class="g" style="left:316px;top:268px;width:24px;height:116px;background:linear-gradient(#c0d0dc,#8aa0b0)"></div>
<div class="g" style="left:72px;top:272px;width:10px;height:4px;background:#6aa58f;border-radius:2px"></div>
<div class="g" style="left:196px;top:272px;width:10px;height:4px;background:#6aa58f;border-radius:2px"></div>
<div class="t" style="left:68px;top:388px">◷ ADMIN, APRIL 04, 2024 &nbsp;▢ 14</div>
<div class="t" style="left:192px;top:388px">◷ ADMIN, APRIL 04, 2024 &nbsp;▢ 14</div>
</div>

<!-- RIGHT CARD 5 -->
<div class="card" style="left:896px;top:3214px;width:340px;height:400px">
<div class="t" style="left:16px;top:10px">◎ UNITED STATES &nbsp; ◎ STORE LOCATOR</div>
<span class="logo" style="left:231px">WOOMEN</span>
<div class="nav" style="left:182px;top:20px">NEW ARRIVALS &nbsp;WOMEN &nbsp;MEN &nbsp;LOOKBOOKS &nbsp;GIFTS &nbsp;EXPLORE</div>
<div class="g" style="left:0;top:30px;width:340px;height:1px;background:#f0f0f0"></div>
<div class="ttl" style="left:155px;top:50px;font-size:5px;word-spacing:2px">SHOPPING CART &nbsp;&nbsp; › &nbsp;&nbsp; <span style="color:#bbb">CHECKOUT</span> &nbsp;&nbsp; › &nbsp;&nbsp; <span style="color:#bbb">ORDER COMPLETE</span></div>
<div class="g" style="left:155px;top:58px;width:44px;height:1px;background:#333"></div>
<div class="t" style="left:77px;top:90px;color:#333">PRODUCT</div>
<div class="t" style="left:180px;top:90px;color:#333">PRICE</div>
<div class="t" style="left:218px;top:90px;color:#333">QUANTITY</div>
<div class="t" style="left:267px;top:90px;color:#333">SUBTOTAL</div>
<div class="g" style="left:68px;top:97px;width:242px;height:1px;background:#eee"></div>
<div class="ph" style="left:77px;top:105px;width:36px;height:52px"><div class="g" style="left:6px;top:10px;width:24px;height:32px;background:linear-gradient(90deg,#a8bfe0,#f2f4f8,#8eaad8,#eef2f8)"></div></div>
<div class="t" style="left:118px;top:127px;color:#333;font-size:3.2px">SHIRTS IN COTTON AND LINEN<br>WITH STRIPES</div>
<div class="t" style="left:180px;top:129px">$1,995.00</div>
<div class="g" style="left:218px;top:126px;width:24px;height:8px;border:1px solid #eee"></div>
<div class="t" style="left:267px;top:129px">$9,995.00</div>
<div class="g" style="left:68px;top:163px;width:242px;height:1px;background:#eee"></div>
<div class="ph" style="left:77px;top:169px;width:36px;height:50px"><div class="g" style="left:14px;top:8px;width:8px;height:14px;background:#1e1e20"></div><div class="g" style="left:12px;top:22px;width:12px;height:10px;background:#5a3426"></div><div class="g" style="left:14px;top:34px;width:8px;height:12px;background:#111"></div></div>
<div class="t" style="left:118px;top:192px;color:#333;font-size:3.2px">CROPPED TANK TOP IN COTTON</div>
<div class="t" style="left:180px;top:192px">$1,995.00</div>
<div class="g" style="left:218px;top:189px;width:24px;height:8px;border:1px solid #eee"></div>
<div class="t" style="left:267px;top:192px">$9,995.00</div>
<div class="g" style="left:68px;top:225px;width:242px;height:1px;background:#eee"></div>
<div class="g" style="left:68px;top:231px;width:102px;height:12px;border:1px solid #eee"></div>
<div class="t" style="left:73px;top:235px;color:#aaa">Coupon Code &nbsp; &nbsp; &nbsp; &nbsp; &nbsp; &nbsp; &nbsp; &nbsp; &nbsp; <span style="color:#333">APPLY COUPON</span></div>
<div class="g" style="left:322px;top:92px;width:18px;height:110px;border:1px solid #eee;border-right:none"></div>
<div class="t" style="left:327px;top:97px;color:#333;font-size:5px">CAR</div>
<div class="g" style="left:327px;top:173px;width:13px;height:11px;background:#222"></div>
<div class="ttl" style="left:170px;top:267px;width:160px;text-align:center;font-size:7px;font-weight:bold">YOU MAY ALSO LIKE</div>
<div class="ph" style="left:68px;top:290px;width:100px;height:110px"><div class="g" style="left:24px;top:48px;width:52px;height:32px;background:#161616;border-radius:2px 2px 8px 8px"></div></div>
<div class="ph" style="left:169px;top:290px;width:81px;height:110px"><div class="g" style="left:14px;top:25px;width:52px;height:60px;background:#d8c8aa;border-radius:8px"></div></div>
<div class="ph" style="left:251px;top:290px;width:89px;height:110px"><div class="g" style="left:15px;top:20px;width:58px;height:90px;background:#1e2230;border-radius:10px 10px 0 0"></div></div>
</div>

</div></body></html>
